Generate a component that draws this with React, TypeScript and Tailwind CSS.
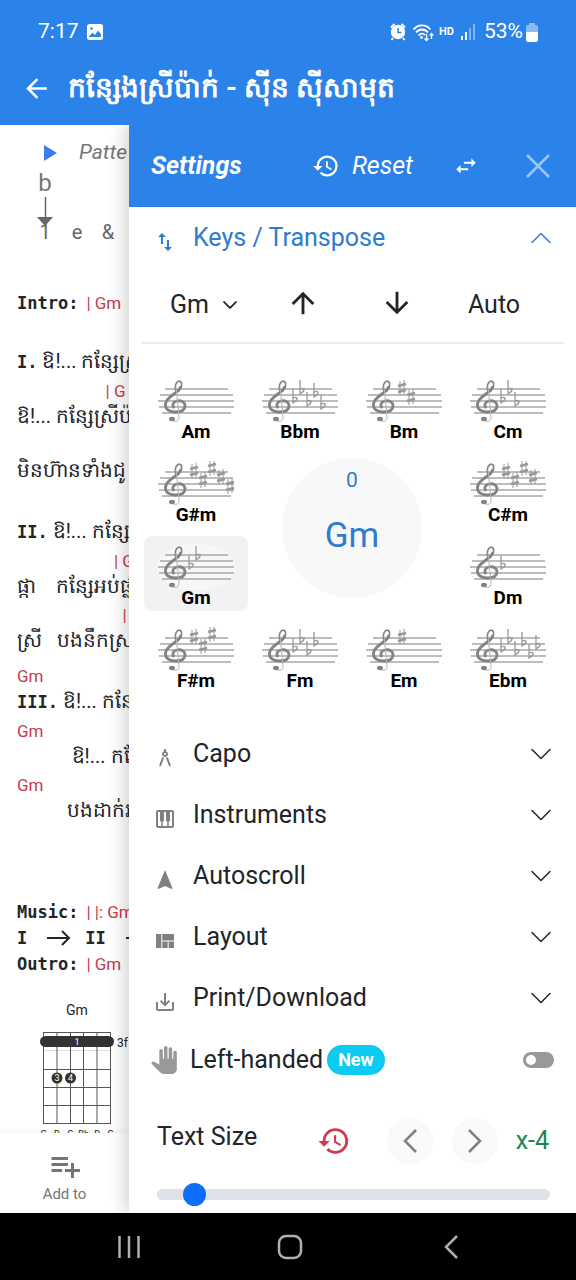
import { useState } from "react";
import type { ReactNode } from "react";
import { BsChevronDown, BsChevronUp } from "react-icons/bs";
import {
  MdArchitecture,
  MdArrowBack,
  MdArrowDownward,
  MdArrowUpward,
  MdHistory,
  MdImportExport,
  MdNavigation,
  MdOutlinePiano,
  MdPanTool,
  MdPlaylistAdd,
  MdSaveAlt,
  MdSwapHoriz,
  MdViewQuilt,
} from "react-icons/md";

type KeySignature = { name: string; sharps?: number; flats?: number };

const KEYS: KeySignature[] = [
  { name: "Am" },
  { name: "Bbm", flats: 5 },
  { name: "Bm", sharps: 2 },
  { name: "Cm", flats: 3 },
  { name: "G#m", sharps: 5 },
  { name: "C#m", sharps: 4 },
  { name: "Gm", flats: 2 },
  { name: "Dm", flats: 1 },
  { name: "F#m", sharps: 3 },
  { name: "Fm", flats: 4 },
  { name: "Em", sharps: 1 },
  { name: "Ebm", flats: 6 },
];

const FLAT_Y = [20, 11, 23, 14, 26, 17];
const SHARP_Y = [9, 18, 6, 15, 24];

function Staff({ sharps = 0, flats = 0 }: { sharps?: number; flats?: number }) {
  return (
    <svg viewBox="0 -1 80 46" className="w-20 h-[46px]" fill="none" stroke="#858282" aria-hidden="true">
      <path d="M9 10H72M4 16H77M2 22H78M3 28H78M6 34H75" stroke="#a9a7a7" strokeWidth="1.3" />
      <path d="M20 13C18 7 20 2.500 23.500 2C27 3 26 9 22 13" strokeWidth="1.600" />
      <path
        d="M25 7C24 14 10 17 9.500 25C9 30 13 33 19 33C25 33 29 31 29 27C29 23 25 21 21 22C17 23 15.500 26 18 29"
        strokeWidth="2.800"
      />
      <path d="M20 8L23 37C23.500 42 20 44 16 41" strokeWidth="1" stroke="#b5b3b3" />
      <ellipse cx="16" cy="40" rx="3" ry="2.200" fill="#858282" stroke="none" />
      {FLAT_Y.slice(0, flats).map((y, i) => (
        <path
          key={i}
          d={`M${33 + i * 7} ${y - 10}V${y + 4}C${38 + i * 7} ${y + 1} ${39 + i * 7} ${y - 3} ${33 + i * 7} ${y - 1}`}
          strokeWidth="1.300"
          stroke="#9a9898"
        />
      ))}
      {SHARP_Y.slice(0, sharps).map((y, i) => (
        <g key={i} stroke="#9a9694">
          <path d={`M${36 + i * 9} ${y - 7}V${y + 8}M${40 + i * 9} ${y - 8}V${y + 7}`} strokeWidth="1" />
          <path
            d={`M${34 + i * 9} ${y - 2}L${42 + i * 9} ${y - 4}M${34 + i * 9} ${y + 4}L${42 + i * 9} ${y + 2}`}
            strokeWidth="2.800"
          />
        </g>
      ))}
    </svg>
  );
}

function StatusBar() {
  return (
    <div className="flex items-center justify-between h-16 pl-[38px] pr-[38px] text-[21px]">
      <div className="flex items-center gap-2">
        <span>7:17</span>
        <svg viewBox="0 0 16 16" className="w-4 h-4" aria-hidden="true">
          <rect width="16" height="16" rx="2.500" fill="#fff" />
          <path d="M2 12.500L5.500 8.500L8 11L11 6.500L14 10.500V13H2Z" fill="#2b82e8" />
          <circle cx="4.500" cy="4.500" r="1.300" fill="#2b82e8" />
        </svg>
      </div>
      <div className="flex items-center">
        <svg viewBox="0 0 16 18" className="w-4 h-[18px]" aria-hidden="true">
          <path d="M1 4.500L4.500 1M15 4.500L11.500 1M3 15L1.500 17M13 15L14.500 17" stroke="#fff" strokeWidth="2" />
          <circle cx="8" cy="9" r="7.200" fill="#fff" />
          <path d="M8 5V9.500H11.500" stroke="#2b82e8" strokeWidth="1.500" fill="none" />
        </svg>
        <svg viewBox="0 0 22 19" className="ml-[6px] w-[22px] h-[19px]" fill="none" stroke="#fff" strokeWidth="1.800" aria-hidden="true">
          <path d="M1.500 6.500C6 1 14 1 18.500 6.500M4 9.500C7.500 5.500 12.500 5.500 16 9.500M6.500 12.500C8.500 10 11.500 10 13 12" />
          <circle cx="9.500" cy="14.500" r="1.400" fill="#fff" stroke="none" />
          <path d="M14.500 11V17.500M12.500 15.500L14.500 17.500L16.500 15.500M19.500 16V10.500M17.800 12.500L19.500 10.500L21.200 12.500" strokeWidth="1.300" />
        </svg>
        <span className="ml-[5px] text-[11px] font-bold">HD</span>
        <svg viewBox="0 0 15 16" className="ml-[7px] w-[15px] h-4" fill="#fff" aria-hidden="true">
          <rect x="0" y="12" width="2" height="4" />
          <rect x="4" y="8" width="2" height="8" />
          <rect x="8" y="4" width="2" height="12" opacity="0.400" />
          <rect x="12" y="0" width="2" height="16" opacity="0.400" />
        </svg>
        <span className="ml-2">53%</span>
        <svg viewBox="0 0 12 19" className="ml-[3px] w-3 h-[19px]" fill="#fff" aria-hidden="true">
          <path d="M3 0H9V2H10Q12 2 12 4V9H0V4Q0 2 2 2H3Z" opacity="0.450" />
          <path d="M0 9H12V17Q12 19 10 19H2Q0 19 0 17Z" />
        </svg>
      </div>
    </div>
  );
}

function Line({ chord, children }: { chord?: string; children: ReactNode }) {
  return (
    <div className="flex flex-col justify-end h-[54px]">
      {chord && <p className="text-[17px] leading-6 text-[#c73a4c] whitespace-pre">{chord}</p>}
      <p className="text-xl leading-[26px] whitespace-pre">{children}</p>
    </div>
  );
}

function Mono({ children }: { children: ReactNode }) {
  return <b className="font-['DejaVu_Sans_Mono','Liberation_Mono',monospace] text-[17px]">{children}</b>;
}

function LongArrow() {
  return (
    <svg viewBox="0 0 24 16" className="w-6 h-4 shrink-0" fill="none" stroke="currentColor" strokeWidth="2" aria-hidden="true">
      <path d="M0 8H22M15 1L22 8L15 15" />
    </svg>
  );
}

function ChordDiagram() {
  return (
    <figure className="mt-[21px] ml-[23px] w-28">
      <figcaption className="w-[74px] text-center text-sm leading-6">Gm</figcaption>
      <svg viewBox="0 0 112 111" className="block w-28 h-[111px]" aria-label="Gm chord, barre at fret 3">
        <path d="M3 10.500H71M3 47.500H71M3 65.500H71M3 83.500H71M3 101.500H71" stroke="#555" />
        <path d="M3 28.500H71" stroke="#ddd" />
        <path d="M3.500 10V102M17 10V102M30.500 10V102M43.500 10V102M57 10V102M70.500 10V102" stroke="#555" />
        <rect x="0" y="14" width="74" height="11" rx="5.500" fill="#333" />
        <g fill="#333">
          <circle cx="17" cy="56" r="5.500" />
          <circle cx="30.500" cy="56" r="5.500" />
        </g>
        <g fill="#fff" fontSize="9" textAnchor="middle">
          <text x="37" y="23">1</text>
          <text x="17" y="59">3</text>
          <text x="30.500" y="59">4</text>
        </g>
        <text x="77" y="25" fontSize="12" fill="#222">3f</text>
        <g fill="#222" fontSize="9" textAnchor="middle">
          {["G", "D", "G", "Bb", "D", "G"].map((note, i) => (
            <text key={i} x={3.5 + i * 13.4} y="115">{note}</text>
          ))}
        </g>
      </svg>
    </figure>
  );
}

function Song() {
  return (
    <section className="flex flex-col shrink-0 w-[129px] overflow-hidden text-[#212529]">
      <div className="flex-1 overflow-hidden pt-3 pl-[17px] whitespace-nowrap">
        <div className="flex items-center h-8 pl-[27px] text-[#757575]">
          <button aria-label="Play pattern">
            <svg viewBox="0 0 13 16" className="w-[13px] h-4">
              <path d="M0 0L13 8L0 16Z" fill="#3b7cf0" />
            </svg>
          </button>
          <span className="ml-[22px] text-[21px] italic">Patte</span>
        </div>
        <p className="w-14 h-7 text-center text-2xl leading-7 text-[#757575]">b</p>
        <svg viewBox="0 0 16 30" className="ml-5 w-4 h-[30px]" aria-hidden="true">
          <path d="M8.500 0V22" stroke="#666" strokeWidth="1.500" />
          <path d="M0 20H16L8 29Z" fill="#666" />
        </svg>
        <div className="-mt-[7px] ml-3 flex w-[94px] text-xl leading-6 text-[#666]">
          <span className="w-8 text-center">1</span>
          <span className="w-8 text-center">e</span>
          <span className="w-[30px] text-center">&amp;</span>
        </div>

        <p className="mt-[46px] mb-[5px] h-[26px] leading-[26px]">
          <Mono>Intro:</Mono>
          <span className="ml-2 text-[17px] text-[#c73a4c]">| Gm</span>
        </p>
        <Line>
          <Mono>I.</Mono> ឱ!... កន្សែស្រ
        </Line>
        <Line chord="                     | G">ឱ!... កន្សែស្រីប៉</Line>
        <Line>មិនហ៊ានទាំងជូ</Line>
        <div className="mt-2">
          <Line>
            <Mono>II.</Mono> ឱ!... កន្សែ
          </Line>
          <Line chord="                       | G">ផ្កា    កន្សែអប់ផ្ល</Line>
          <Line chord="                         |">ស្រី   បងនឹកស្រ</Line>
        </div>
        <div className="mt-2">
          <Line chord="Gm">
            <Mono>III.</Mono> ឱ!... កន្សែ
          </Line>
          <Line chord="Gm">{"           "}ឱ!... កនែ</Line>
          <Line chord="Gm">{"          "}បងដាក់រ</Line>
        </div>
        <div className="mt-[76px] leading-[26px]">
          <p className="h-[26px]">
            <Mono>Music:</Mono>
            <span className="ml-2 text-[17px] text-[#c73a4c]">| |: Gm</span>
          </p>
          <p className="flex items-center h-[26px]">
            <Mono>I</Mono>
            <span className="ml-5 mr-[14px]">
              <LongArrow />
            </span>
            <Mono>II</Mono>
            <span className="ml-5">
              <LongArrow />
            </span>
          </p>
          <p className="h-[26px]">
            <Mono>Outro:</Mono>
            <span className="ml-2 text-[17px] text-[#c73a4c]">| Gm</span>
          </p>
        </div>
        <ChordDiagram />
      </div>
      <button className="flex flex-col items-center h-20 pt-[15px] shadow-[0_-2px_6px_rgba(0,0,0,0.05)] text-[15px] leading-5 text-[#757575]">
        <MdPlaylistAdd className="size-9" />
        Add to
      </button>
    </section>
  );
}

function MenuRow({ icon, label }: { icon: ReactNode; label: string }) {
  return (
    <button className="flex items-center w-full h-[61px] pl-6 pr-[23px] text-left">
      <span className="w-10 pt-2 text-[#808080]">{icon}</span>
      <span className="flex-1">{label}</span>
      <BsChevronDown className="size-6" />
    </button>
  );
}

export default function App() {
  const [selected, setSelected] = useState("Gm");
  const [leftHanded, setLeftHanded] = useState(false);
  const [size, setSize] = useState(1);

  const renderKey = (k: KeySignature) => (
    <button
      key={k.name}
      onClick={() => setSelected(k.name)}
      className={
        k.name === selected
          ? "flex flex-col items-center h-[75px] pt-2 rounded-lg bg-[#f1f2f4]"
          : "flex flex-col items-center h-[75px] pt-2 rounded-lg"
      }
    >
      <span className={k.name === selected ? "rounded-[50%] bg-[#f5f7f9]" : ""}>
        <Staff sharps={k.sharps} flats={k.flats} />
      </span>
      <span className="text-[19px] leading-4 font-bold text-black">{k.name}</span>
    </button>
  );

  return (
    <div className="flex flex-col min-h-screen bg-white font-['Roboto','Noto_Sans',sans-serif]">
      <header className="relative z-10 h-[125px] bg-[#2b82e8] text-white">
        <StatusBar />
        <div className="flex items-center h-12 pl-[21px]">
          <button aria-label="Back">
            <MdArrowBack className="size-[31px]" />
          </button>
          <h1 className="ml-4 text-[28px] leading-[46px] font-bold whitespace-nowrap">កន្សែងស្រីប៉ាក់ - ស៊ីន ស៊ីសាមុត</h1>
        </div>
      </header>

      <main className="flex flex-1 overflow-hidden">
        <Song />

        <aside className="relative flex-1 min-w-0 bg-white text-[25px] leading-9 text-[#212529] shadow-[-2px_0_18px_rgba(0,0,0,0.22)]">
          <div className="flex items-center h-[82px] pl-[22px] pr-[26px] bg-[#2b82e8] text-white italic">
            <h2 className="flex-1 font-bold">Settings</h2>
            <button className="flex items-center gap-3 italic">
              <MdHistory className="size-7" />
              Reset
            </button>
            <button aria-label="Swap sides" className="ml-10">
              <MdSwapHoriz className="size-[26px]" />
            </button>
            <button aria-label="Close" className="ml-[47px]">
              <svg viewBox="0 0 24 24" className="size-6">
                <path d="M1 1L23 23M23 1L1 23" stroke="#9bc4f5" strokeWidth="2.500" />
              </svg>
            </button>
          </div>

          <button className="flex items-center w-full h-[61px] pl-6 pr-[23px] text-left text-[#2f7bd0]">
            <span className="w-10 pt-2">
              <MdImportExport className="size-6" />
            </span>
            <span className="flex-1">Keys / Transpose</span>
            <BsChevronUp className="size-6" />
          </button>

          <div className="grid grid-cols-[104fr_94fr_94fr_100fr] items-center justify-items-center h-[74px] pl-[23px] pr-8">
            <label className="flex items-center gap-3">
              <select
                aria-label="Key"
                value={selected}
                onChange={(e) => setSelected(e.target.value)}
                className="w-10 appearance-none bg-transparent outline-none"
              >
                {KEYS.map((k) => (
                  <option key={k.name}>{k.name}</option>
                ))}
              </select>
              <BsChevronDown className="size-4 stroke-1" />
            </label>
            <button aria-label="Key up" className="pb-1">
              <MdArrowUpward className="size-[34px]" />
            </button>
            <button aria-label="Key down" className="pb-1">
              <MdArrowDownward className="size-[34px]" />
            </button>
            <button>Auto</button>
          </div>
          <hr className="mx-3 border-t-2 border-[#ececec]" />

          <div className="grid grid-cols-4 gap-y-2 pt-[26px] pl-[15px] pr-4">
            {KEYS.slice(0, 5).map(renderKey)}
            <div className="col-span-2 row-span-2 flex flex-col items-center justify-self-center mt-[5px] size-[140px] pt-[6px] rounded-full bg-[#f8f8f8] text-[#2f7bd0]">
              <span className="text-[21px] leading-8">0</span>
              <span className="mt-[18px] text-[35px] leading-11">{selected}</span>
            </div>
            {KEYS.slice(5).map(renderKey)}
          </div>

          <div className="pt-[29px]">
            <MenuRow icon={<MdArchitecture className="size-6" />} label="Capo" />
            <MenuRow icon={<MdOutlinePiano className="size-6" />} label="Instruments" />
            <MenuRow icon={<MdNavigation className="size-6" />} label="Autoscroll" />
            <MenuRow icon={<MdViewQuilt className="size-6" />} label="Layout" />
            <MenuRow icon={<MdSaveAlt className="size-6" />} label="Print/Download" />
          </div>

          <label className="flex items-center h-16 pl-[21px] pr-[22px]">
            <MdPanTool className="size-7 text-[#999]" />
            <span className="ml-3">Left-handed</span>
            <span className="ml-1 px-[11px] rounded-full bg-[#0dcaf0] text-lg leading-[30px] font-bold text-white">New</span>
            <input
              type="checkbox"
              checked={leftHanded}
              onChange={(e) => setLeftHanded(e.target.checked)}
              className="ml-auto w-[31px] h-4 appearance-none rounded-full bg-[#999] p-[3px] before:block before:size-[10px] before:rounded-full before:bg-white checked:before:ml-auto"
            />
          </label>

          <div className="flex items-center h-[46px] mt-[26px] pl-7 pr-[27px]">
            <label htmlFor="text-size" className="flex-1 pb-2">
              Text Size
            </label>
            <button aria-label="Reset text size" className="text-[#d03a4c]">
              <MdHistory className="size-[34px]" />
            </button>
            <button
              aria-label="Smaller"
              onClick={() => setSize(Math.max(0, size - 1))}
              className="ml-9 grid place-items-center size-[46px] rounded-full bg-[#f8f9fa] text-[#808080]"
            >
              <svg viewBox="0 0 14 24" className="w-[14px] h-6" fill="none" stroke="currentColor" strokeWidth="2.500">
                <path d="M13 1L2 12L13 23" />
              </svg>
            </button>
            <button
              aria-label="Larger"
              onClick={() => setSize(Math.min(14, size + 1))}
              className="ml-[19px] grid place-items-center size-[46px] rounded-full bg-[#f8f9fa] text-[#808080]"
            >
              <svg viewBox="0 0 14 24" className="w-[14px] h-6" fill="none" stroke="currentColor" strokeWidth="2.500">
                <path d="M1 1L12 12L1 23" />
              </svg>
            </button>
            <output className="ml-[18px] text-[#198754]">x{size - 5}</output>
          </div>
          <div className="flex items-center h-12 pt-3 pl-7 pr-[26px]">
            <input
              id="text-size"
              type="range"
              min={0}
              max={14}
              value={size}
              onChange={(e) => setSize(Number(e.target.value))}
              className="w-full h-[11px] appearance-none rounded-full bg-[#dee2e6] [&::-webkit-slider-thumb]:appearance-none [&::-webkit-slider-thumb]:size-[23px] [&::-webkit-slider-thumb]:rounded-full [&::-webkit-slider-thumb]:bg-[#0d6efd]"
            />
          </div>
        </aside>
      </main>

      <nav className="relative z-10 flex items-center justify-between h-[67px] pl-[118px] pr-[114px] bg-black text-[#b0b0b0]">
        <button aria-label="Recents">
          <svg viewBox="0 0 22 24" className="w-[22px] h-6" stroke="currentColor" strokeWidth="2.500">
            <path d="M1.500 1V23M11 1V23M20.500 1V23" />
          </svg>
        </button>
        <button aria-label="Home">
          <svg viewBox="0 0 26 26" className="size-[26px]" fill="none" stroke="currentColor" strokeWidth="2.500">
            <rect x="2" y="2" width="22" height="22" rx="7" />
          </svg>
        </button>
        <button aria-label="Back" className="w-[22px] grid place-items-center">
          <svg viewBox="0 0 14 24" className="w-[14px] h-6" fill="none" stroke="currentColor" strokeWidth="2.500">
            <path d="M13 1L2 12L13 23" />
          </svg>
        </button>
      </nav>
    </div>
  );
}
